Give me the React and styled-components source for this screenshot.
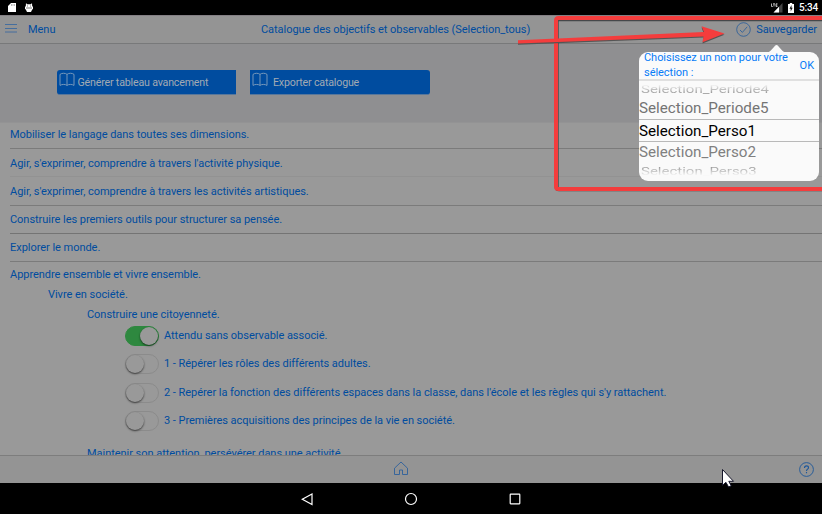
import React from "react";
import styled, { createGlobalStyle } from "styled-components";

const GlobalStyle = createGlobalStyle`
  * { box-sizing: border-box; }
  body { margin: 0; overflow: hidden; background: #000; font-family: Roboto, sans-serif; }
  svg { display: block; }
`;

const Screen = styled.div`
  position: relative;
  width: 822px;
  height: 514px;
  display: flex;
  flex-direction: column;
  overflow: hidden;
  color: #004c9f;
  font-size: 11px;
  line-height: 14px;
  letter-spacing: -0.035px;
`;

const StatusBar = styled.div`
  flex: 0 0 15px;
  background: #000;
  color: #fff;
  display: flex;
  align-items: center;
  justify-content: space-between;
  padding: 0 5px 0 8px;
`;

const StatusGroup = styled.div`
  display: flex;
  align-items: center;
  gap: ${(p) => p.$gap}px;
`;

const Clock = styled.span`
  font-size: 10px;
  font-weight: 500;
  line-height: 15px;
  width: 18px;
  white-space: nowrap;
  letter-spacing: -0.2px;
`;

const Toolbar = styled.header`
  flex: 0 0 29px;
  display: grid;
  grid-template-columns: 256px 1fr 286px;
  background: #949494;
  border-top: 1px solid #837f84;
  border-bottom: 1px solid #78797a;
`;

const ToolbarSide = styled.div`
  display: flex;
  align-items: center;
  justify-content: ${(p) => (p.$end ? "flex-end" : "flex-start")};
  gap: ${(p) => (p.$end ? 5 : 11)}px;
  padding: ${(p) => (p.$end ? "0 5px 0 0" : "0 0 0 5px")};
`;

const Label = styled.span`
  white-space: nowrap;
`;

const Title = styled.h1`
  margin: 0;
  padding-top: 6.5px;
  padding-left: 5px;
  font-size: 11px;
  font-weight: 400;
  white-space: nowrap;
  letter-spacing: -0.045px;
`;

const Actions = styled.div`
  flex: 0 0 78px;
  display: flex;
  align-items: flex-start;
  gap: 14px;
  padding: 26px 0 0 57px;
  background: #8f8f91;
`;

const ActionButton = styled.button`
  display: flex;
  align-items: flex-start;
  gap: ${(p) => p.$gap}px;
  width: ${(p) => p.$width}px;
  height: 25px;
  border: 0;
  border-bottom: 1px solid #58779b;
  padding: 2px 0 0 2px;
  border-radius: ${(p) => p.$radius};
  background: #004c9f;
  color: #a2aab3;
  font: 10.67px/21px Roboto, sans-serif;
  letter-spacing: -0.19px;
  text-align: left;
`;

const Content = styled.main`
  flex: 0 0 333px;
  overflow: hidden;
  background: #999;
  border-top: 1px solid #939394;
`;

const Domain = styled.div`
  height: ${(p) => p.$height}px;
  margin-left: 10px;
  padding-top: ${(p) => p.$top}px;
  border-bottom: 1px solid ${(p) => p.$line};
`;

const Heading = styled.div`
  height: ${(p) => p.$height}px;
  padding-left: ${(p) => p.$indent}px;
  padding-top: ${(p) => p.$top || 0}px;
  white-space: nowrap;
`;

const Observable = styled.div`
  display: flex;
  align-items: center;
  gap: 6px;
  height: 28.3px;
  padding-left: 125px;
`;

const Track = styled.span`
  display: flex;
  justify-content: ${(p) => (p.$on ? "flex-end" : "flex-start")};
  width: 34px;
  margin-right: -1px;
  height: 20px;
  border-radius: 10px;
  border: 1px solid ${(p) => (p.$on ? "#2e883f" : "#8b8b8b")};
  background: ${(p) => (p.$on ? "#2e883f" : "#999")};
`;

const Knob = styled.span`
  width: 18px;
  height: 18px;
  border-radius: 50%;
  background: #999;
  box-shadow: 0 1px 2px rgba(0, 0, 0, 0.6);
`;

const Footer = styled.footer`
  flex: 0 0 28px;
  display: grid;
  grid-template-columns: 393px 16px 1fr;
  align-items: center;
  padding: 0 8px 0 0;
  background: #949494;
  border-top: 1px solid #7d7d7d;
`;

const FooterIcon = styled.div`
  grid-column: ${(p) => p.$column};
  justify-self: ${(p) => p.$justify};
  padding-bottom: ${(p) => p.$lift || 0}px;
`;

const NavBar = styled.nav`
  flex: 1;
  display: flex;
  justify-content: center;
  align-items: center;
  gap: 90px;
  background: #000;
`;

const Popover = styled.section`
  position: absolute;
  left: 639px;
  top: 52px;
  width: 180px;
  height: 129px;
  border-radius: 9px;
  background: #fafafa;
`;

const PopoverTip = styled.svg`
  position: absolute;
  left: 129px;
  top: -8px;
`;

const PopoverHeader = styled.div`
  display: flex;
  align-items: center;
  justify-content: space-between;
  height: 29px;
  padding: 0 5px;
  border-bottom: 2px solid #e0e0e0;
  color: #087cf7;
`;

const Prompt = styled.div`
  width: 150px;
  line-height: 14.8px;
  margin-top: 1px;
  white-space: nowrap;
  letter-spacing: -0.04px;
`;

const Picker = styled.div`
  height: 99px;
  overflow: hidden;
  border-radius: 0 0 9px 9px;
`;

const Option = styled.div`
  height: ${(p) => p.$height}px;
  overflow: hidden;
  display: flex;
  align-items: center;
  font-size: 15.2px;
  letter-spacing: 0;
  color: ${(p) => p.$color};
  border-top: ${(p) => (p.$selected ? "1px solid #b9b9b9" : "0")};
  border-bottom: ${(p) => (p.$selected ? "1px solid #b9b9b9" : "0")};
`;

const Faded = styled.span`
  display: block;
  padding-left: 2px;
  font-size: 15px;
  line-height: 16px;
  transform: scaleY(0.78);
  background: linear-gradient(${(p) => (p.$up ? "to top" : "to bottom")}, #969696 15%, #fafafa 88%);
  background-clip: text;
  -webkit-background-clip: text;
  color: transparent;
`;

const Overlay = styled.svg`
  position: absolute;
  left: 0;
  top: 0;
  pointer-events: none;
`;

const Book = () => (
  <svg width="16" height="15" viewBox="0 0 16 15" fill="none" stroke="#829fbd" strokeWidth="0.9">
    <path d="M8 2.4C6.4.9 2.9.9 1 2.4v11c1.9-1.3 5.4-1.3 7 0 1.6-1.3 5.1-1.3 7 0v-11C13.1.9 9.6.9 8 2.4v11" />
  </svg>
);

const Burger = () => (
  <svg width="12" height="13" viewBox="0 0 12 13" fill="none" stroke="#3c6a9f" strokeWidth="0.9">
    <path d="M0 1.500h12M0 5.500h12M0 9h12" />
  </svg>
);

const CheckCircle = () => (
  <svg width="15" height="15" viewBox="0 0 15 15" fill="none" stroke="#265c9a" strokeWidth="0.8">
    <circle cx="7.5" cy="7.5" r="6.8" />
    <path d="M4 8l2.4 2.4 4.8-5.6" />
  </svg>
);

const domains = [
  ["Mobiliser le langage dans toutes ses dimensions.", 26, 5, "#7b7b7b"],
  ["Agir, s'exprimer, comprendre à travers l'activité physique.", 28, 7.5, "#929292"],
  ["Agir, s'exprimer, comprendre à travers les activités artistiques.", 29, 7.5, "#7b7b7b"],
  ["Construire les premiers outils pour structurer sa pensée.", 28, 7, "#747474"],
  ["Explorer le monde.", 28, 7, "#7b7b7b"],
];

const observables = [
  ["Attendu sans observable associé.", true],
  ["1 - Répérer les rôles des différents adultes.", false],
  ["2 - Repérer la fonction des différents espaces dans la classe, dans l'école et les règles qui s'y rattachent.", false],
  ["3 - Premières acquisitions des principes de la vie en société.", false],
];

export default function App() {
  return (
    <>
      <GlobalStyle />
      <Screen>
        <StatusBar>
          <StatusGroup $gap={9}>
            <svg width="8" height="9" viewBox="0 0 8 9"><path d="M3 0h5v9H0V3z" fill="#fff" /><path d="M3.5 1v2M5 1v2M6.5 1v2" stroke="#777" strokeWidth=".5" /></svg>
            <svg width="8" height="10" viewBox="0 0 8 10"><path d="M1 0l1 1.2h4L7 0l.2 3L8 4v2l-.8.5L6 9H2L.8 6.5 0 6V4l.8-1z" fill="#fff" /><path d="M2 3h1M5 3h1M1 5h6" stroke="#555" strokeWidth=".8" /></svg>
          </StatusGroup>
          <StatusGroup $gap={5}>
            <svg width="12" height="10" viewBox="0 0 12 10">
              <path d="M11.5 0v9.5H2.5z" fill="#444" /><path d="M8 3.7v5.8H2.5z" fill="#fff" />
              <path d="M.5.5v3h1.3M2 .8h2M3 .8v2.7M6.5.8H5v2.7h1.5M5 2.1h1.3" fill="none" stroke="#ddd" strokeWidth=".8" />
            </svg>
            <svg width="6" height="10" viewBox="0 0 6 10"><path d="M0 1h1.8V0h2.4v1H6v9H0z" fill="#fff" /><path d="M3.5 2L1.5 5.7h1.2V8.5l2-3.8H3.5z" fill="#111" /></svg>
            <Clock>5:34</Clock>
          </StatusGroup>
        </StatusBar>

        <Toolbar>
          <ToolbarSide><Burger /><Label>Menu</Label></ToolbarSide>
          <Title>Catalogue des objectifs et observables (Selection_tous)</Title>
          <ToolbarSide $end><CheckCircle /><Label>Sauvegarder</Label></ToolbarSide>
        </Toolbar>

        <Actions>
          <ActionButton $width={179} $gap={2.5} $radius="3px 0 0 3px"><Book /><Label>Générer tableau avancement</Label></ActionButton>
          <ActionButton $width={180} $gap={5} $radius="0 3px 3px 0"><Book /><Label>Exporter catalogue</Label></ActionButton>
        </Actions>

        <Content>
          {domains.map(([text, height, top, line]) => (
            <Domain key={text} $height={height} $top={top} $line={line}><Label>{text}</Label></Domain>
          ))}
          <Heading $indent={10} $height={25} $top={5.5}>Apprendre ensemble et vivre ensemble.</Heading>
          <Heading $indent={48} $height={20} $top={0.5}>Vivre en société.</Heading>
          <Heading $indent={87} $height={15} $top={0.5}>Construire une citoyenneté.</Heading>
          {observables.map(([text, on]) => (
            <Observable key={text}><Track $on={on}><Knob /></Track><Label>{text}</Label></Observable>
          ))}
          <Heading $indent={87} $height={20} $top={11.5}>Maintenir son attention, persévérer dans une activité.</Heading>
        </Content>

        <Footer>
          <FooterIcon $column={2} $justify="start" $lift={2}>
            <svg width="16" height="15" viewBox="0 0 16 15" fill="none" stroke="#2c609c" strokeWidth="0.9"><path d="M1.5 7.2L8 1l6.5 6.2v6.3h-5V9h-3v4.5h-5z" /></svg>
          </FooterIcon>
          <FooterIcon $column={3} $justify="end">
            <svg width="15" height="15" viewBox="0 0 15 15" fill="none" stroke="#1d579a" strokeWidth="0.9"><circle cx="7.5" cy="7.5" r="6.9" /><path d="M5.5 6c0-3 4-2.7 4-.3 0 1.5-2 1.5-2 3.3M7.5 10v1.3" strokeWidth="1.1" /></svg>
          </FooterIcon>
        </Footer>

        <NavBar>
          <svg width="14" height="14" viewBox="0 0 14 14" fill="none" stroke="#fff" strokeWidth="1.2"><path d="M12 2v10.5L2.3 7.2z" /></svg>
          <svg width="14" height="14" viewBox="0 0 14 14" fill="none" stroke="#fff" strokeWidth="1.2"><circle cx="7" cy="7" r="5.5" /></svg>
          <svg width="14" height="14" viewBox="0 0 14 14" fill="none" stroke="#fff" strokeWidth="1.2"><rect x="2.2" y="2.2" width="9.6" height="9.6" rx=".5" /></svg>
        </NavBar>

        <Popover>
          <PopoverTip width="17" height="9" viewBox="0 0 17 9"><path d="M0 8.5c2-.8 5-4.5 7-6.8q1.500-1.500 3 0c2 2.300 5 6 7 6.800z" fill="#fafafa" /></PopoverTip>
          <PopoverHeader><Prompt>Choisissez un nom pour votre<br />sélection :</Prompt><span>OK</span></PopoverHeader>
          <Picker>
            <Option $height={16}><Faded $up>Selection_Periode4</Faded></Option>
            <Option $height={22} $color="#747474">Selection_Periode5</Option>
            <Option $height={23} $color="#000" $selected>Selection_Perso1</Option>
            <Option $height={20} $color="#808080">Selection_Perso2</Option>
            <Option $height={17}><Faded>Selection_Perso3</Faded></Option>
          </Picker>
        </Popover>

        <Overlay width="822" height="514" viewBox="0 0 822 514">
          <g fill="none">
            <path d="M826 19.300H559q-2.300 0-2.300 2.300V187q0 2.300 2.300 2.300H826" stroke="#45484a" strokeWidth="4" />
            <path d="M826 18H558.500q-2.500 0-2.500 2.500V186.500q0 2.500 2.500 2.500H826" stroke="#f43d3d" strokeWidth="4" />
          </g>
          <path d="M518 41.300L704 34.200 701.500 27.500 724.500 34.800 702.500 43.500 703.500 37.500 518 44.800z" fill="#555" />
          <path d="M518 40.300L704 32 701.500 26.300 724.500 33.600 702.500 42.300 703.500 36.500 518 43.600z" fill="#f43d3d" />
          <path d="M722.500 469.500v15.800l3.400-3 2.700 4.700 2.600-1.200-2.400-4.500h4.700z" fill="#fff" stroke="#15152a" />
        </Overlay>
      </Screen>
    </>
  );
}
